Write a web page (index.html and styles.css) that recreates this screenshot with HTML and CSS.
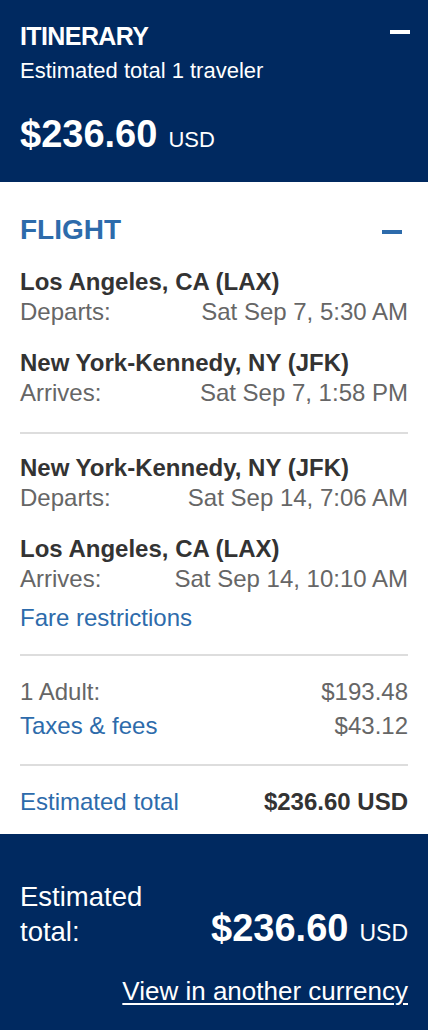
FILE: index.html
```html
<!DOCTYPE html>
<html lang="en">
<head>
<meta charset="utf-8">
<title>Itinerary</title>
<link rel="stylesheet" href="styles.css">
</head>
<body>
<div class="page">
  <header class="summary">
    <div class="summary-top">
      <h1 class="summary-title">ITINERARY</h1>
      <span class="minus minus-white"></span>
    </div>
    <p class="summary-sub">Estimated total 1 traveler</p>
    <div class="price-line">
      <span class="price-big">$236.60</span>
      <span class="price-cur">USD</span>
    </div>
  </header>

  <section class="flight">
    <div class="flight-head">
      <h2 class="flight-title">FLIGHT</h2>
      <span class="minus minus-blue"></span>
    </div>

    <div class="legs">
      <div class="stop">
        <div class="city">Los Angeles, CA (LAX)</div>
        <div class="row"><span>Departs:</span><span>Sat Sep 7, 5:30 AM</span></div>
      </div>
      <div class="stop">
        <div class="city">New York-Kennedy, NY (JFK)</div>
        <div class="row"><span>Arrives:</span><span>Sat Sep 7, 1:58 PM</span></div>
      </div>
    </div>

    <hr class="divider">

    <div class="legs legs-2">
      <div class="stop">
        <div class="city">New York-Kennedy, NY (JFK)</div>
        <div class="row"><span>Departs:</span><span>Sat Sep 14, 7:06 AM</span></div>
      </div>
      <div class="stop">
        <div class="city">Los Angeles, CA (LAX)</div>
        <div class="row"><span>Arrives:</span><span>Sat Sep 14, 10:10 AM</span></div>
      </div>
      <a class="link fare" href="#">Fare restrictions</a>
    </div>

    <hr class="divider">

    <div class="costs">
      <div class="cost-row"><span>1 Adult:</span><span>$193.48</span></div>
      <div class="cost-row"><a class="link" href="#">Taxes &amp; fees</a><span>$43.12</span></div>
    </div>

    <hr class="divider">

    <div class="cost-row total-row">
      <a class="link" href="#">Estimated total</a>
      <span class="total-amount">$236.60 USD</span>
    </div>
  </section>

  <footer class="bottom">
    <div class="bottom-main">
      <div class="bottom-label">Estimated total:</div>
      <div class="bottom-price">
        <span class="bottom-big">$236.60</span>
        <span class="bottom-cur">USD</span>
      </div>
    </div>
    <div class="bottom-link-wrap">
      <a class="bottom-link" href="#">View in another currency</a>
    </div>
  </footer>
</div>
</body>
</html>
```

FILE: styles.css
```css
* {
  box-sizing: border-box;
}

html, body {
  margin: 0;
  padding: 0;
}

body {
  font-family: "Liberation Sans", Arial, sans-serif;
  background: #ffffff;
  color: #333333;
}

.page {
  width: 428px;
  min-height: 1030px;
  display: flex;
  flex-direction: column;
}

/* ---------- header summary ---------- */
.summary {
  background: #002960;
  color: #ffffff;
  padding: 20px 18px 26px 20px;
}

.summary-top {
  display: flex;
  justify-content: space-between;
  align-items: flex-start;
}

.summary-title {
  margin: 0;
  font-weight: 700;
  font-size: 25px;
  line-height: 32px;
  letter-spacing: -0.6px;
}

.minus {
  display: block;
  width: 20px;
  height: 4px;
}

.minus-white {
  background: #ffffff;
  margin-top: 10px;
}

.minus-blue {
  background: #2d6bab;
  margin-right: 6px;
  margin-top: 16px;
}

.summary-sub {
  margin: 5px 0 0;
  font-size: 22px;
  line-height: 28px;
}

.price-line {
  margin-top: 27px;
  display: flex;
  align-items: baseline;
  gap: 11px;
}

.price-big {
  font-weight: 700;
  font-size: 38px;
  line-height: 44px;
}

.price-cur {
  font-size: 22px;
}

/* ---------- flight section ---------- */
.flight {
  padding: 32px 20px 14px;
  flex: 1;
}

.flight-head {
  display: flex;
  justify-content: space-between;
  align-items: flex-start;
}

.flight-title {
  margin: 0;
  color: #2d6bab;
  font-weight: 700;
  font-size: 28px;
  line-height: 32px;
}

.legs {
  margin-top: 21px;
  display: flex;
  flex-direction: column;
  gap: 21px;
}

.legs-2 {
  margin-top: 19px;
}

.city {
  font-weight: 700;
  font-size: 24px;
  line-height: 30px;
  color: #333333;
}

.row {
  display: flex;
  justify-content: space-between;
  font-size: 24px;
  line-height: 30px;
  color: #666666;
}

.link {
  color: #2d6bab;
  text-decoration: none;
}

.fare {
  font-size: 24px;
  line-height: 30px;
  margin-top: -12px;
}

.divider {
  margin: 24px 0 0;
  border: 0;
  height: 2px;
  background: #dddddd;
}

.legs-2 + .divider {
  margin-top: 21px;
}

.costs {
  margin-top: 19px;
}

.costs + .divider {
  margin-top: 21px;
}

.cost-row {
  display: flex;
  justify-content: space-between;
  font-size: 24px;
  line-height: 34px;
  color: #666666;
}

.total-row {
  margin-top: 19px;
}

.total-amount {
  font-weight: 700;
  color: #333333;
}

/* ---------- bottom bar ---------- */
.bottom {
  background: #002960;
  color: #ffffff;
  padding: 45px 20px 24px;
}

.bottom-main {
  display: flex;
  justify-content: space-between;
  align-items: flex-end;
}

.bottom-label {
  max-width: 150px;
  font-size: 27.5px;
  line-height: 35px;
}

.bottom-price {
  display: flex;
  align-items: baseline;
  gap: 11px;
}

.bottom-big {
  font-weight: 700;
  font-size: 38px;
  line-height: 42px;
}

.bottom-cur {
  font-size: 23px;
}

.bottom-link-wrap {
  margin-top: 27px;
  display: flex;
  justify-content: flex-end;
}

.bottom-link {
  color: #ffffff;
  font-size: 26px;
  line-height: 30px;
  text-decoration: underline;
  text-underline-offset: 3px;
  text-decoration-thickness: 2px;
}
```
